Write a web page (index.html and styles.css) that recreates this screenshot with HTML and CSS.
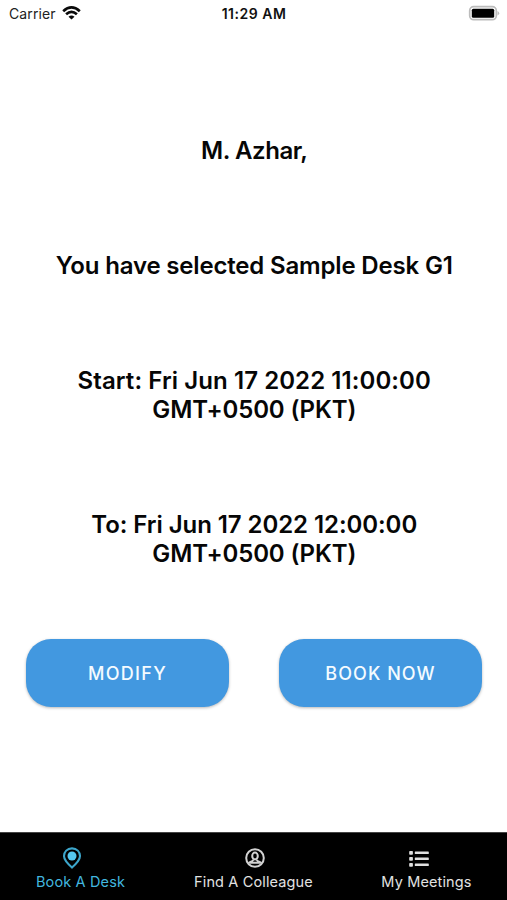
FILE: index.html
```html
<!DOCTYPE html>
<html lang="en">
<head>
<meta charset="utf-8">
<title>Book A Desk</title>
<link rel="stylesheet" href="styles.css">
</head>
<body>
<div class="screen">
  <header class="status">
    <div class="carrier"><span class="carrier-name">Carrier</span>
      <svg class="wifi" width="19" height="14" viewBox="0 0 19 14" fill="none" stroke="#0a0a0a" stroke-width="2.7"><path d="M1.2 5.2Q9.5-2.3 17.8 5.2"/><path d="M4.1 8.3Q9.5 3.5 14.9 8.3"/><path d="M9.5 13.6L6.5 10.7Q9.5 8.2 12.5 10.7Z" fill="#0a0a0a" stroke="none"/></svg>
    </div>
    <time class="clock">11:29 AM</time>
    <svg class="battery" width="32" height="16" viewBox="0 0 32 16"><rect x="1.7" y="1.7" width="26.6" height="13" rx="4" fill="#fff" stroke="#bcbcbc" stroke-width="1.7"/><rect x="3.8" y="3.7" width="22.4" height="9" rx="1.5" fill="#000"/><path d="M29.5 5.9Q31.2 6.7 31.2 8.200T29.5 10.5Z" fill="#bcbcbc"/></svg>
  </header>
  <main class="content">
    <p class="line"><span class="name">M. Azhar,</span></p>
    <p class="line"><span class="desk">You have selected Sample Desk G1</span></p>
    <p class="line"><span class="start">Start: Fri Jun 17 2022 11:00:00</span><br><span class="zone">GMT+0500 (PKT)</span></p>
    <p class="line"><span class="to">To: Fri Jun 17 2022 12:00:00</span><br><span class="zone">GMT+0500 (PKT)</span></p>
    <div class="actions">
      <button class="btn"><span class="modify">MODIFY</span></button>
      <button class="btn"><span class="book">BOOK NOW</span></button>
    </div>
  </main>
  <nav class="tabs">
    <a class="tab active">
      <svg class="icon pin" width="20" height="22" viewBox="0 0 20 22"><path d="M10 1.4C5.2 1.4 2 4.8 2 9c0 4.3 3.8 7.8 8 11.5 4.2-3.7 8-7.2 8-11.5 0-4.2-3.2-7.6-8-7.6Z" fill="none" stroke="#3ca6cb" stroke-width="2.1"/><circle cx="10" cy="9" r="4.5" fill="#55c8ef"/></svg>
      <span class="label">Book A Desk</span>
    </a>
    <a class="tab">
      <svg class="icon" width="22" height="22" viewBox="0 0 22 22" fill="none" stroke="#d2d2d2" stroke-width="2"><circle cx="11" cy="11" r="8.8"/><ellipse cx="11" cy="9" rx="2.8" ry="3.4"/><path d="M4.8 16.2C6.1 14.5 9 14.7 9.3 12.600M12.700 12.600C13 14.700 15.900 14.500 17.200 16.200M5.500 15.700H16.500"/></svg>
      <span class="label">Find A Colleague</span>
    </a>
    <a class="tab">
      <svg class="icon list" width="22" height="20" viewBox="0 0 22 20" fill="#e0e0e0"><rect x="1.2" y="2" width="3.700" height="3.700" rx=".8"/><rect x="1.2" y="8" width="3.700" height="3.700" rx=".8"/><rect x="1.2" y="14" width="3.700" height="3.700" rx=".8"/><rect x="6.800" y="2.500" width="14" height="2.600" rx=".6"/><rect x="6.800" y="8.500" width="14" height="2.600" rx=".6"/><rect x="6.800" y="14.500" width="14" height="2.600" rx=".6"/></svg>
      <span class="label">My Meetings</span>
    </a>
  </nav>
</div>
</body>
</html>
```
FILE: styles.css
```css
* { box-sizing: border-box; }
body { margin: 0; background: #fff; font-family: Inter, "Liberation Sans", sans-serif; }
.screen { width: 507px; height: 900px; display: flex; flex-direction: column; overflow: hidden; }
.status { height: 28px; display: grid; grid-template-columns: 1fr auto 1fr; align-items: center; padding: 0 7px 0 9px; color: #111; }
.carrier { display: flex; align-items: center; gap: 6px; font-size: 14px; line-height: 18px; letter-spacing: .1px; color: #222; }
.wifi { margin-top: -2px; }
.clock { font-size: 14px; font-weight: 600; line-height: 18px; letter-spacing: .5px; margin-right: 1px; }
.battery { justify-self: end; margin-top: -2px; }
.content { flex: 1; padding-top: 108px; text-align: center; color: #060606; }
.line { margin: 0 0 86px; padding-left: 1.5px; font-size: 24px; font-weight: 600; line-height: 29px; white-space: nowrap; }
.line:nth-child(4) { margin-bottom: 71px; }
.name { letter-spacing: -.45px; }
.desk { letter-spacing: -.17px; }
.start { letter-spacing: .08px; }
.to { letter-spacing: -.07px; }
.zone { letter-spacing: -.13px; }
.actions { display: flex; gap: 50px; padding: 0 25px 0 26px; }
.btn { flex: 1; height: 68px; padding: 2px 0 0; border: 0; border-radius: 25px; background: #4298e0; box-shadow: 0 1px 3px rgba(0, 0, 0, .28); color: #f4fbff; font: 500 18px/24px Inter, sans-serif; letter-spacing: 1.3px; }
.book { letter-spacing: 1.05px; }
.tabs { height: 68px; background: #000; border-top: 1px solid #444; display: grid; grid-template-columns: 161px 185px 161px; }
.tab { display: flex; flex-direction: column; align-items: center; padding-top: 14px; color: #e2e2e2; }
.tab .icon { display: block; height: 22px; margin-left: 2px; }
.tab .pin { margin-left: -18px; }
.tab .list { margin: 1px 0 -1px -16px; }
.label { margin-top: 4px; font-size: 14.5px; line-height: 18px; letter-spacing: .14px; white-space: nowrap; }
.active { color: #42b6df; }
```
